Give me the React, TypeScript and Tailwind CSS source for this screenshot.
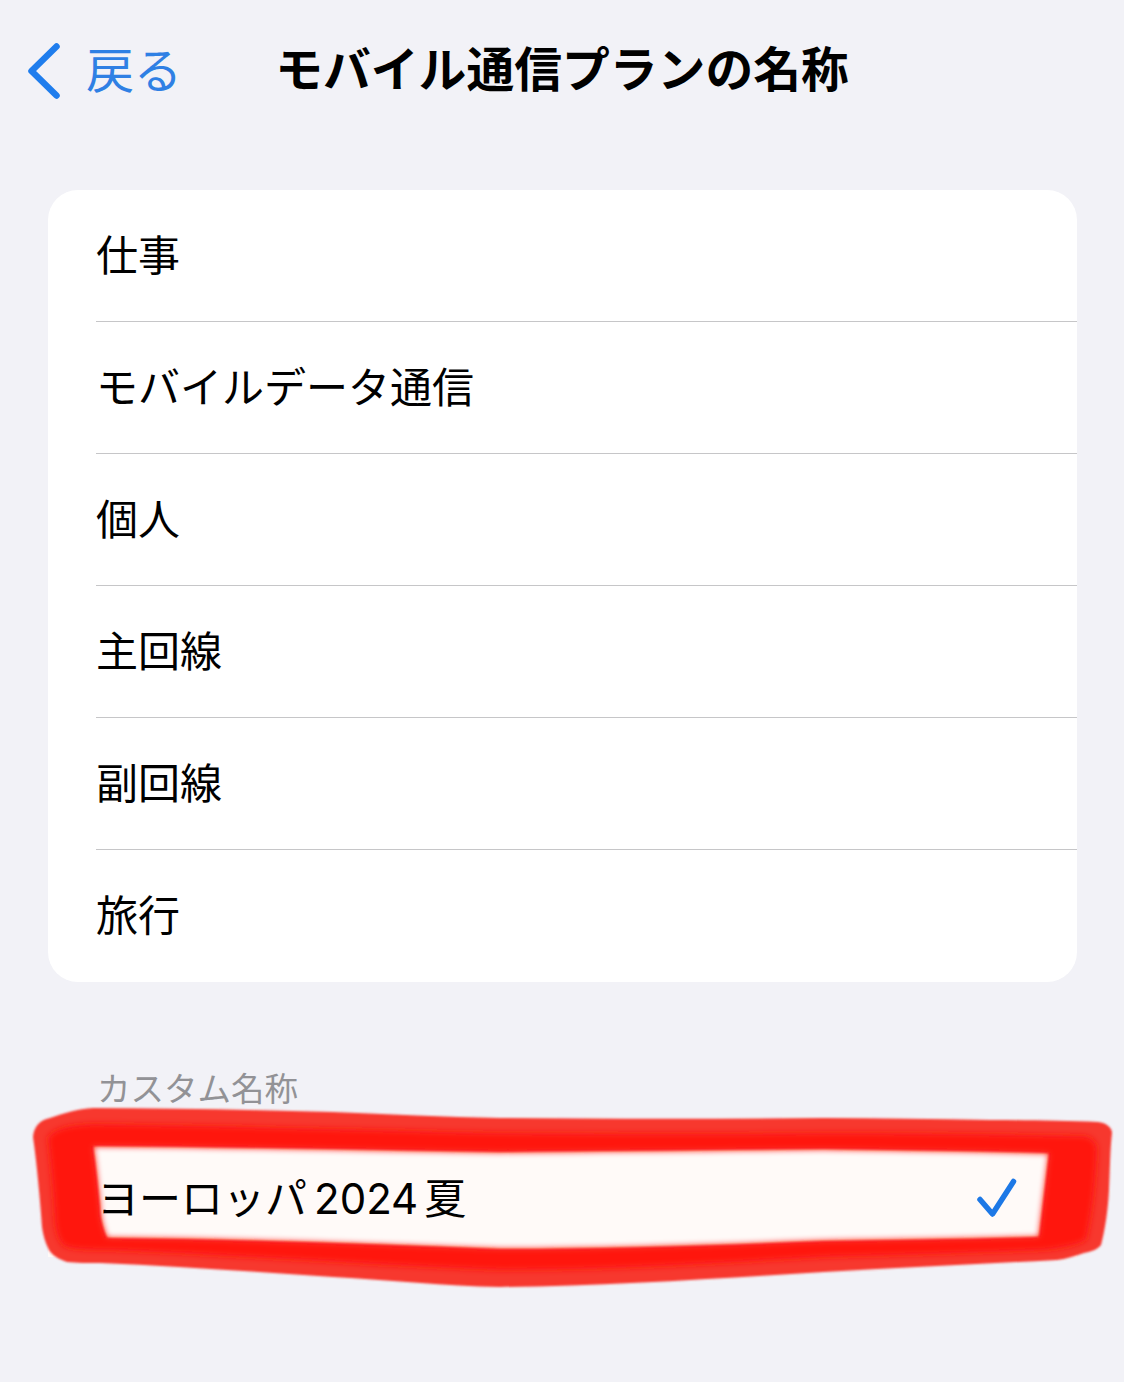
const FONT = "font-['Inter','Noto_Sans_CJK_JP',sans-serif]";

const ITEMS = ["仕事", "モバイルデータ通信", "個人", "主回線", "副回線", "旅行"];

const OUTER =
  "M33 1137 C34 1126 40 1120 50 1118 C64 1113 78 1109 93 1108 C170 1108 250 1110 333 1112 C390 1114 445 1117 500 1118 C610 1119 720 1119 824 1118 C880 1118 935 1119 990 1120 C1030 1120 1065 1121 1098 1122 C1106 1123 1112 1127 1112 1133 C1110 1150 1110 1170 1109 1190 C1108 1210 1105 1230 1101 1245 C1097 1250 1090 1252 1084 1253 C1075 1256 1066 1259 1057 1260 C980 1264 900 1268 824 1272 C720 1278 610 1286 500 1287 C445 1286 390 1280 333 1277 C255 1272 175 1266 100 1263 C88 1263 76 1263 67 1262 C58 1259 52 1255 49 1250 C45 1242 43 1235 42 1227 C40 1200 37 1165 33 1137 Z";

const INNER =
  "M93 1146 C230 1147 370 1150 500 1152 C610 1151 720 1150 824 1149 C900 1150 975 1151 1049 1153 L1039 1237 C965 1239 895 1240 824 1241 C720 1245 610 1249 500 1249 C370 1244 235 1239 107 1238 C102 1226 100 1215 100 1207 C98 1187 96 1166 93 1146 Z";

const CORE =
  "M48 1138 C55 1127 75 1125 93 1124 C230 1126 370 1130 500 1133 C610 1134 720 1134 824 1133 C910 1133 1000 1134 1085 1136 C1092 1138 1096 1142 1097 1148 C1096 1180 1092 1215 1086 1240 C1075 1246 1060 1248 1045 1250 C970 1253 895 1255 824 1257 C720 1263 610 1270 500 1270 C370 1265 235 1255 110 1250 C95 1250 75 1250 64 1246 C58 1240 56 1230 55 1222 C54 1195 51 1165 48 1138 Z";

function Row({ label, last }: { label: string; last: boolean }) {
  return (
    <li className="pl-12">
      <div
        className={
          last
            ? "flex h-[132px] items-center text-[42px] leading-none text-black"
            : "flex h-[132px] items-center border-b border-[#c6c6c8] text-[42px] leading-none text-black"
        }
      >
        {label}
      </div>
    </li>
  );
}

export default function App() {
  return (
    <div className={`${FONT} relative h-[1382px] w-[1124px] overflow-hidden bg-[#f2f2f7]`}>
      <header className="relative flex h-[142px] items-center justify-center">
        <div className="absolute left-[27px] top-[42px] flex items-center gap-[25px]">
          <svg width="34" height="58" viewBox="0 0 34 58" fill="none" aria-hidden="true">
            <path
              d="M29.5 4.5 L4.5 29 L29.5 53.5"
              stroke="#1f7ded"
              strokeWidth="6.5"
              strokeLinecap="round"
              strokeLinejoin="round"
            />
          </svg>
          <span className="text-[48px] leading-none text-[#2f80e4]">戻る</span>
        </div>
        <h1 className="text-[47.8px] font-bold leading-none text-black">モバイル通信プランの名称</h1>
      </header>

      <ul className="mx-12 mt-12 w-[1029px] overflow-hidden rounded-[30px] bg-white">
        {ITEMS.map((item, i) => (
          <Row key={item} label={item} last={i === ITEMS.length - 1} />
        ))}
      </ul>

      <p className="ml-[97px] mt-[89px] text-[33.5px] leading-9 text-[#929296]">カスタム名称</p>

      <div className="ml-12 mt-[34px] flex h-[116px] w-[1029px] items-center justify-between bg-[#fffaf8] pl-[49px] pr-[58px]">
        <span className="relative z-10 flex items-center text-[42px] leading-none text-black">
          ヨーロッパ
          <span className="ml-[7px] mr-[6px]">2024</span>
          夏
        </span>
        <svg className="relative z-10" width="42" height="42" viewBox="0 0 42 42" fill="none" aria-hidden="true">
          <path
            d="M3 21.5 L15.5 36 L36.5 3.5"
            stroke="#1d78e6"
            strokeWidth="5.5"
            strokeLinecap="round"
            strokeLinejoin="round"
          />
        </svg>
      </div>

      <svg
        className="pointer-events-none absolute left-0 top-0"
        width="1124"
        height="1382"
        viewBox="0 0 1124 1382"
        aria-hidden="true"
      >
        <defs>
          <filter id="soft" x="-5%" y="-5%" width="110%" height="110%">
            <feGaussianBlur stdDeviation="1" />
          </filter>
          <filter id="softer" x="-5%" y="-5%" width="110%" height="110%">
            <feGaussianBlur stdDeviation="3" />
          </filter>
        </defs>
        <path d={`${OUTER} ${INNER}`} fillRule="evenodd" fill="#f7372f" filter="url(#soft)" />
        <path d={`${CORE} ${INNER}`} fillRule="evenodd" fill="#ff1510" filter="url(#softer)" />
      </svg>
    </div>
  );
}
